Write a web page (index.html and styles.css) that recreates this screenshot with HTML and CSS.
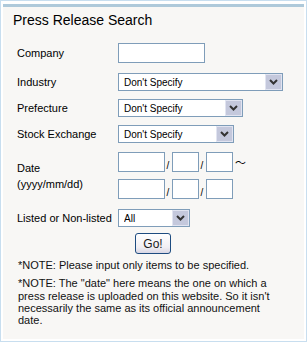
FILE: index.html
```html
<!DOCTYPE html>
<html>

<head>
    <meta charset='UTF-8'>
    <meta name='viewport' content='width=device-width, initial-scale=1.0'>
    <title>Press Release Search</title>
    <link rel="stylesheet" href="styles.css">
</head>

<body>
    <div class="frame">
        <div class="panel">
            <h2 class="title">Press Release Search</h2>
            <form class="search">
                <div class="row company-row">
                    <label class="label">Company</label>
                    <input class="text company" type="text">
                </div>
                <div class="row">
                    <label class="label">Industry</label>
                    <div class="select industry">
                        <select><option>Don't Specify</option></select>
                        <span class="arrow"><svg width="9" height="6" viewBox="0 0 9 6"><path d="M1 1 L4.5 4.5 L8 1" fill="none" stroke="#333" stroke-width="2"/></svg></span>
                    </div>
                </div>
                <div class="row">
                    <label class="label">Prefecture</label>
                    <div class="select prefecture">
                        <select><option>Don't Specify</option></select>
                        <span class="arrow"><svg width="9" height="6" viewBox="0 0 9 6"><path d="M1 1 L4.5 4.5 L8 1" fill="none" stroke="#333" stroke-width="2"/></svg></span>
                    </div>
                </div>
                <div class="row exchange-row">
                    <label class="label">Stock Exchange</label>
                    <div class="select exchange">
                        <select><option>Don't Specify</option></select>
                        <span class="arrow"><svg width="9" height="6" viewBox="0 0 9 6"><path d="M1 1 L4.5 4.5 L8 1" fill="none" stroke="#333" stroke-width="2"/></svg></span>
                    </div>
                </div>
                <div class="row date-row">
                    <label class="label">Date<br>(yyyy/mm/dd)</label>
                    <div class="dates">
                        <div class="date">
                            <input class="text year" type="text"><span class="slash">/</span><input class="text md" type="text"><span class="slash">/</span><input class="text md" type="text"><span class="tilde">～</span>
                        </div>
                        <div class="date">
                            <input class="text year" type="text"><span class="slash">/</span><input class="text md" type="text"><span class="slash">/</span><input class="text md" type="text">
                        </div>
                    </div>
                </div>
                <div class="row listed-row">
                    <label class="label">Listed or Non-listed</label>
                    <div class="select listed">
                        <select><option>All</option></select>
                        <span class="arrow"><svg width="9" height="6" viewBox="0 0 9 6"><path d="M1 1 L4.5 4.5 L8 1" fill="none" stroke="#333" stroke-width="2"/></svg></span>
                    </div>
                </div>
                <div class="submit">
                    <button type="button" class="go">Go!</button>
                </div>
            </form>
            <p class="note">*NOTE: Please input only items to be specified.</p>
            <p class="note">*NOTE: The "date" here means the one on which a press release is uploaded on this website. So it isn't necessarily the same as its official announcement date.</p>
        </div>
    </div>
</body>

</html>
```

FILE: styles.css
```css
/* 全体 */
body {
    margin: 0;
    font-family: "Liberation Sans", Arial, sans-serif;
    font-size: 11px;
    color: #000;
}

/* 外枠 */
.frame {
    width: 307px;
    height: 342px;
    box-sizing: border-box;
    border: 1px solid #c8deef;
    padding: 3px 2px 2px 2px;
    background-color: #fff;
}

.panel {
    height: 100%;
    box-sizing: border-box;
    border-top: 3px solid #aec9da;
    background-color: #f8f7f5;
    padding: 0 24px 0 14px;
}

/* 見出し */
.title {
    margin: 0 0 0 -4px;
    padding-top: 5px;
    height: 36px;
    box-sizing: border-box;
    font-size: 14px;
    line-height: 16px;
    font-weight: normal;
    color: #000;
}

/* フォーム */
.search {
    display: flex;
    flex-direction: column;
}

.row {
    display: grid;
    grid-template-columns: 101px auto;
    align-items: center;
    margin-bottom: 8px;
}

.company-row,
.date-row {
    margin-bottom: 10px;
}

.exchange-row {
    margin-bottom: 9px;
}

.listed-row {
    margin-bottom: 6px;
}

.label {
    line-height: 16px;
}

.text {
    margin: 0;
    padding: 0;
    height: 20px;
    box-sizing: border-box;
    border: 1px solid #7f9db9;
    background-color: #fff;
}

.company {
    width: 87px;
}

/* セレクト */
.select {
    display: flex;
    height: 18px;
    box-sizing: border-box;
    border: 1px solid #7f9db9;
    background-color: #fff;
}

.select select {
    flex: 1;
    min-width: 0;
    appearance: none;
    -webkit-appearance: none;
    border: none;
    outline: none;
    background: transparent;
    padding: 0 0 0 5px;
    font-family: "Liberation Sans", Arial, sans-serif;
    font-size: 10px;
    color: #000;
}

.arrow {
    width: 17px;
    box-sizing: border-box;
    border: 1px solid #e1e4f1;
    background-color: #c4c8dc;
    display: flex;
    align-items: center;
    justify-content: center;
}

.industry {
    width: 165px;
}

.prefecture {
    width: 125px;
}

.exchange {
    width: 116px;
}

.listed {
    width: 72px;
}

/* 日付 */
.date-row {
    align-items: start;
}

.date-row .label {
    padding-top: 8px;
}

.dates {
    display: flex;
    flex-direction: column;
    gap: 7px;
}

.date {
    display: flex;
    align-items: flex-end;
}

.year {
    width: 47px;
}

.md {
    width: 27px;
}

.slash {
    width: 6px;
    text-align: center;
    font-size: 10px;
    line-height: 12px;
}

.slash + .text {
    margin-left: 1px;
}

.tilde {
    align-self: center;
    font-size: 11px;
    margin-left: 2px;
    font-family: "Noto Sans CJK JP", sans-serif;
}

/* ボタン */
.submit {
    display: flex;
    padding-left: 118px;
}

.go {
    width: 36px;
    height: 21px;
    padding: 0;
    border: 1px solid #1e4c80;
    border-radius: 3px;
    background: linear-gradient(#ffffff, #f1eff3 70%, #d8d6e4);
    font-family: "Liberation Sans", Arial, sans-serif;
    font-size: 12px;
    color: #1a1a1a;
}

/* 注意書き */
.note {
    margin: 5px 0 0 1px;
    line-height: 12.33px;
    color: #111;
}

.note + .note {
    margin-top: 6px;
}
```
